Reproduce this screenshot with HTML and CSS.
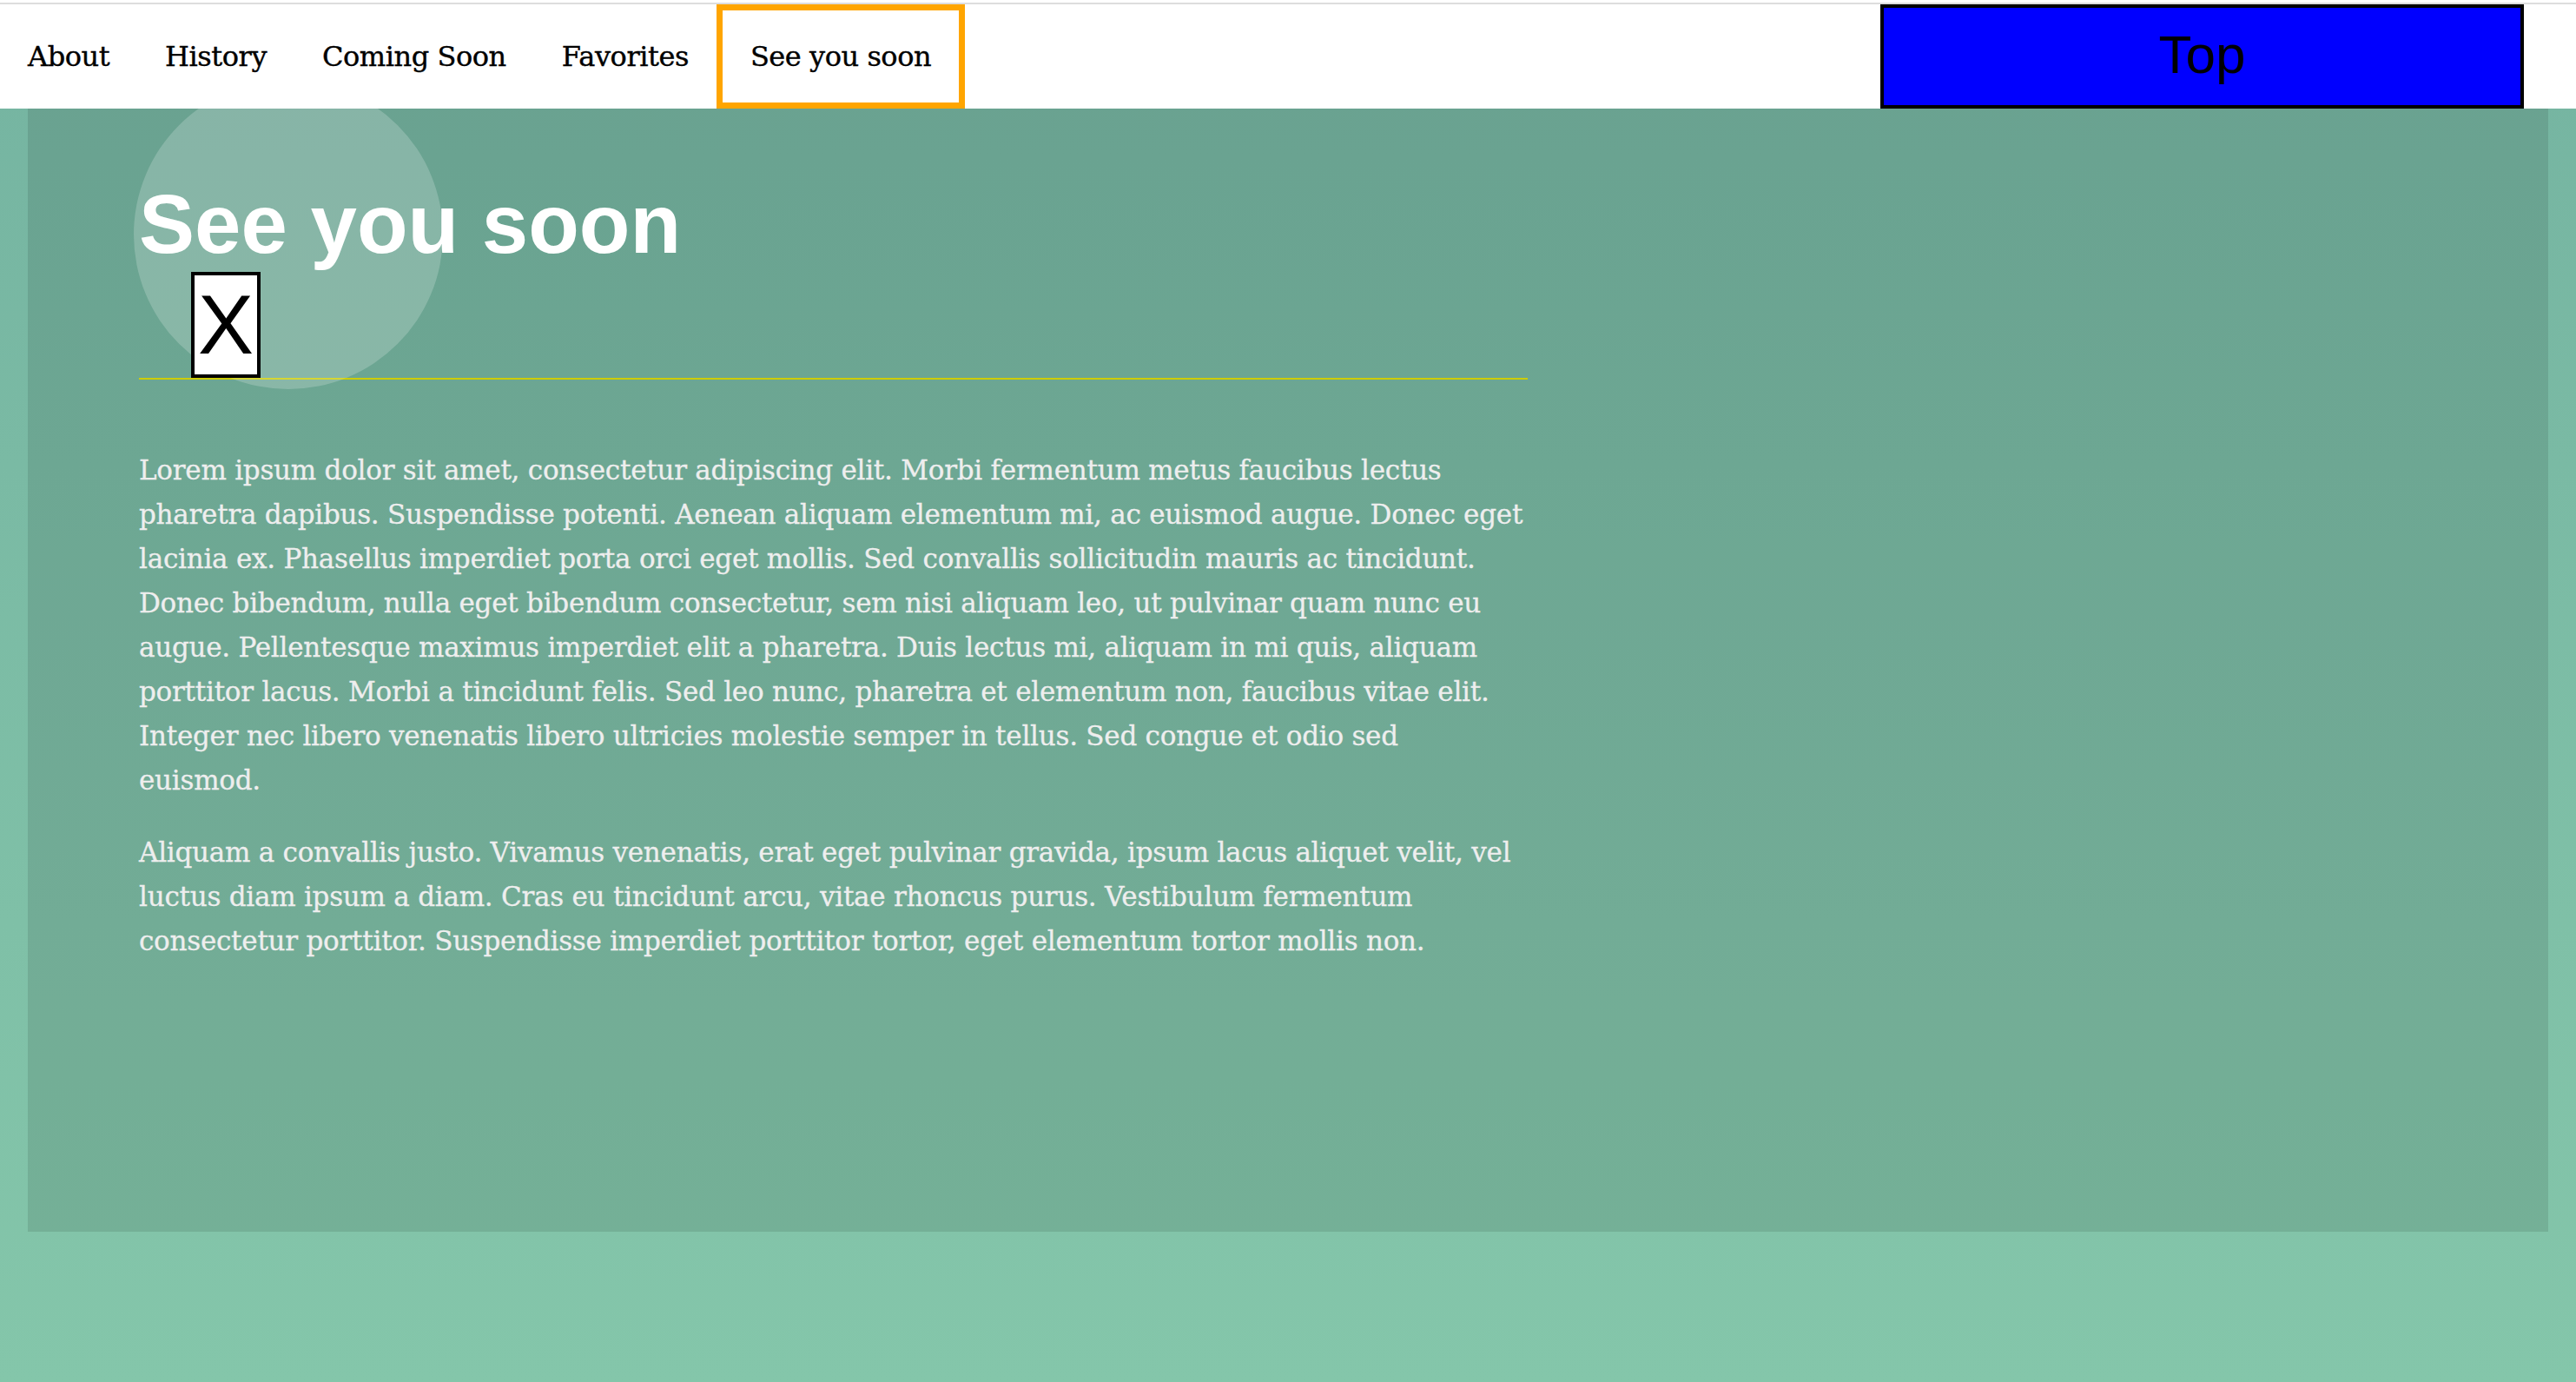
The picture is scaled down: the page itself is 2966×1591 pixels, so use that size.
FILE: index.html
```html
<!DOCTYPE html>
<html lang="en">
<head>
<meta charset="utf-8">
<title>See you soon</title>
<link rel="stylesheet" href="styles.css">
</head>
<body>
<header class="topbar">
  <nav class="nav">
    <a class="nav-link" href="#about">About</a>
    <a class="nav-link" href="#history">History</a>
    <a class="nav-link" href="#coming">Coming Soon</a>
    <a class="nav-link" href="#favorites">Favorites</a>
    <a class="nav-link is-active" href="#soon">See you soon</a>
    <button class="top-btn" type="button">Top</button>
  </nav>
</header>
<main class="panel">
  <section class="content">
    <div class="title-block">
      <h1 class="title">See you soon</h1>
      <button class="close-btn" type="button">X</button>
    </div>
    <div class="body-text">
      <p>Lorem ipsum dolor sit amet, consectetur adipiscing elit. Morbi fermentum metus faucibus lectus pharetra dapibus. Suspendisse potenti. Aenean aliquam elementum mi, ac euismod augue. Donec eget lacinia ex. Phasellus imperdiet porta orci eget mollis. Sed convallis sollicitudin mauris ac tincidunt. Donec bibendum, nulla eget bibendum consectetur, sem nisi aliquam leo, ut pulvinar quam nunc eu augue. Pellentesque maximus imperdiet elit a pharetra. Duis lectus mi, aliquam in mi quis, aliquam porttitor lacus. Morbi a tincidunt felis. Sed leo nunc, pharetra et elementum non, faucibus vitae elit. Integer nec libero venenatis libero ultricies molestie semper in tellus. Sed congue et odio sed euismod.</p>
      <p>Aliquam a convallis justo. Vivamus venenatis, erat eget pulvinar gravida, ipsum lacus aliquet velit, vel luctus diam ipsum a diam. Cras eu tincidunt arcu, vitae rhoncus purus. Vestibulum fermentum consectetur porttitor. Suspendisse imperdiet porttitor tortor, eget elementum tortor mollis non.</p>
    </div>
  </section>
</main>
</body>
</html>
```
FILE: styles.css
```css
html {
  background: #ffffff;
}
body {
  margin: 0;
  min-height: 1591px;
  background: linear-gradient(to bottom, #ffffff 0, #ffffff 5px, #75b4a1 5px, #84c6aa 100%);
  font-family: "DejaVu Serif", serif;
}
.topbar {
  position: relative;
  z-index: 2;
  background: #ffffff;
  padding-top: 3px;
}
.nav {
  display: flex;
  align-items: stretch;
  height: 120px;
  border-top: 2px solid #dddddd;
  background: #ffffff;
}
.nav-link {
  display: flex;
  align-items: center;
  box-sizing: border-box;
  height: 120px;
  padding: 0 32px;
  color: #000000;
  text-decoration: none;
  font-family: "DejaVu Serif", serif;
  font-size: 32px;
  letter-spacing: -0.45px;
  -webkit-text-stroke: 0.4px #000000;
}
.nav-link.is-active {
  border: 7.5px solid #ffa500;
  padding: 0 32px;
}
.top-btn {
  margin-left: auto;
  margin-right: 60px;
  width: 741px;
  height: 120px;
  box-sizing: border-box;
  border: 4px solid #000000;
  background: #0000ff;
  color: #000000;
  font-family: "Liberation Sans", Arial, sans-serif;
  font-size: 62px;
  line-height: 1;
  padding: 0 0 4px;
  cursor: pointer;
}
.panel {
  display: block;
  box-sizing: border-box;
  margin: 0 32px;
  min-height: 1293px;
  background: rgba(0, 0, 0, 0.1);
  padding: 78px 0 0 128px;
}
.content {
  width: 1599px;
}
.title-block {
  position: relative;
  border-bottom: 2px solid #cccc00;
}
.title-block::before {
  content: "";
  position: absolute;
  left: -6px;
  top: -111px;
  width: 356px;
  height: 356px;
  border-radius: 50%;
  background: rgba(255, 255, 255, 0.2);
  z-index: 0;
}
.title {
  position: relative;
  z-index: 1;
  margin: 0;
  font-family: "Liberation Sans", Arial, sans-serif;
  font-weight: bold;
  font-size: 96px;
  line-height: 110px;
  color: #ffffff;
}
.close-btn {
  position: relative;
  z-index: 1;
  display: block;
  margin: 0 0 0 60px;
  width: 80px;
  height: 122px;
  box-sizing: border-box;
  border: 4px solid #000000;
  background: #ffffff;
  color: #000000;
  padding: 0;
  font-family: "Liberation Sans", Arial, sans-serif;
  font-size: 96px;
  line-height: 114px;
  cursor: pointer;
}
.body-text {
  padding-top: 79px;
}
.body-text p {
  margin: 0 0 32px;
  font-family: "DejaVu Serif", serif;
  font-size: 31px;
  letter-spacing: -0.25px;
  line-height: 51px;
  color: #eeeeee;
  -webkit-text-stroke: 0.3px #eeeeee;
}
```
